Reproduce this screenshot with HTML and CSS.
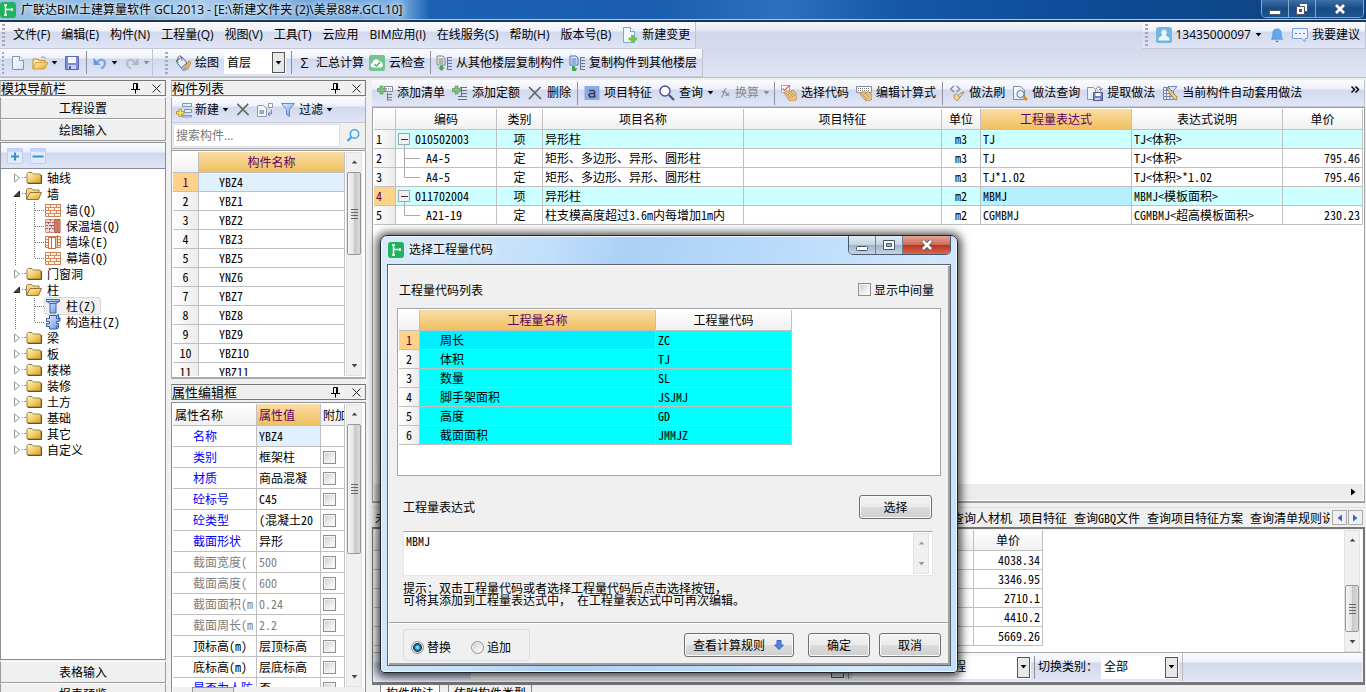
FILE: index.html
```html
<!DOCTYPE html>
<html lang="zh-CN">
<head>
<meta charset="utf-8">
<title>广联达BIM土建算量软件 GCL2013</title>
<link rel="stylesheet" href="styles.css">
</head>
<body>
<svg class="defs" aria-hidden="true">
  <defs>
    <linearGradient id="gold" x1="0" y1="0" x2="1" y2="1"><stop offset="0" stop-color="#fff3c0"/><stop offset=".5" stop-color="#f3cf6c"/><stop offset="1" stop-color="#d99a1e"/></linearGradient>
    <linearGradient id="blue" x1="0" y1="0" x2="1" y2="1"><stop offset="0" stop-color="#e4eeff"/><stop offset="1" stop-color="#6d95e0"/></linearGradient>
    <linearGradient id="paper" x1="0" y1="0" x2="1" y2="1"><stop offset="0" stop-color="#fff"/><stop offset="1" stop-color="#d6e0ee"/></linearGradient>
  </defs>
  <symbol id="logo" viewBox="0 0 16 16"><rect width="16" height="16" rx="3" fill="#1fb35c"/><path d="M4 3h3M5.500 3v10M4 13h3M6 7.500h7M12 6v3" stroke="#fff" stroke-width="1.500" fill="none"/></symbol>
  <symbol id="newdoc" viewBox="0 0 16 16"><path d="M2.500 1.500h7l4 4v9h-11z" fill="url(#paper)" stroke="#8494ad"/><path d="M9.500 1.500v4h4" fill="#fff" stroke="#8494ad"/></symbol>
  <symbol id="open" viewBox="0 0 16 16"><path d="M1 14V4h5l1 1.500h6V8" fill="#fbe7a8" stroke="#c08a26"/><path d="M1 14l3-6.500h12L12.500 14z" fill="url(#gold)" stroke="#d0a04a"/><path d="M9 3c2-2 4-1 5 1" fill="none" stroke="#6f8fb8"/></symbol>
  <symbol id="save" viewBox="0 0 16 16"><path d="M1.500 1.500h13v13h-13z" fill="#7f8edc" stroke="#5a68b8"/><path d="M4 2h8v6H4z" fill="#f4f7ff"/><path d="M4 10h8v4H4z" fill="#c9d2ee"/><path d="M5 11h2v3H5z" fill="#4a58a8"/></symbol>
  <symbol id="undo" viewBox="0 0 16 16"><path d="M5.500 7C8 3.500 13 4 13 8.500c0 2.500-2 4-4 5" fill="none" stroke="#7aa6e4" stroke-width="2.200"/><path d="M1.500 3v7h7z" fill="#6797dc"/></symbol>
  <symbol id="redo" viewBox="0 0 16 16"><path d="M10.500 7C8 3.500 3 4 3 8.500c0 2.500 2 4 4 5" fill="none" stroke="#b8bec9" stroke-width="2.200"/><path d="M14.500 3v7h-7z" fill="#adb4c2"/></symbol>
  <symbol id="caret" viewBox="0 0 8 5"><path d="M.500 0h7L4 4.500z" fill="currentColor"/></symbol>
  <symbol id="bucket" viewBox="0 0 16 16"><path d="M1 6l6-4 5 6-6 5z" fill="url(#paper)" stroke="#56657c"/><path d="M3 8C2 3 3 1 5 1s2 3 2 5" fill="none" stroke="#56657c"/><path d="M10 12l4-6 2 1-3 7-5 2z" fill="#eebc62" stroke="#ae7a22" stroke-width=".7"/><path d="M6 14l5-3 1 2-4 3z" fill="#7badea"/></symbol>
  <symbol id="cloud" viewBox="0 0 16 16"><rect width="16" height="16" rx="2" fill="#70c58d"/><path d="M4 12.500c-3 0-3-4-.5-4.500C4 4 9 3 10.500 6.500c4-.5 4.500 6 1 6z" fill="#fff"/><path d="M5.500 9l2 2L11 7" fill="none" stroke="#4cae70" stroke-width="1.300"/></symbol>
  <symbol id="copyfrom" viewBox="0 0 16 16"><path d="M1 1h6l2 2v7H1z" fill="#eee" stroke="#85888e"/><path d="M2.500 4h5M2.500 6h5M2.500 8h5" stroke="#777"/><path d="M11.500 2v13M11 2.500h5M11 5.500h5M11 8.500h5M11 11.500h5M11 14.500h5" stroke="#5379bf" fill="none"/><path d="M4 10.500h3v2h2L5.500 16 2 12.500h2z" fill="#45a456"/></symbol>
  <symbol id="copyto" viewBox="0 0 16 16"><path d="M1 1h6l2 2v7H1z" fill="#dce9ff" stroke="#4a73b5"/><path d="M2.500 4h5M2.500 6h5M2.500 8h5" stroke="#4a73b5"/><path d="M11.500 2v13M11 2.500h5M11 5.500h5M11 8.500h5M11 11.500h5M11 14.500h5" stroke="#727983" fill="none"/><path d="M3 11h3v2h2l-1 3H3z" fill="#45a456"/></symbol>
  <symbol id="docplus" viewBox="0 0 16 16"><path d="M1.500.5h7l4 4v11h-11z" fill="#f1f8ff" stroke="#72a7d5"/><path d="M8.500.5v4h4" fill="#fff" stroke="#72a7d5"/><path d="M9 8h3v2.500h3v3h-3V16H9v-2.500H6.500v-3H9z" fill="#74c33a"/></symbol>
  <symbol id="user" viewBox="0 0 16 16"><rect width="16" height="16" rx="2.500" fill="#73b7dd"/><path d="M8 2.500a3 3 0 0 1 1.500 5.500l4 3v2.500h-11V11l4-3A3 3 0 0 1 8 2.500z" fill="#e7f5fc"/></symbol>
  <symbol id="bell" viewBox="0 0 14 16"><path d="M7 1c4 0 4.500 3 4.500 6S12 10 13 12H1c1-2 1.500-2 1.500-5S3 1 7 1z" fill="#62a9f2" stroke="#4186cf" stroke-width=".7"/><path d="M5 13.500h4L7 15.500z" fill="#3c7dc4"/></symbol>
  <symbol id="chat" viewBox="0 0 16 16"><path d="M.5 1.500h15v10H13V15l-3-3.500H.500z" fill="#eaf2fd" stroke="#76a3e0"/><path d="M3 6.500h2M7 6.500h2M11 6.500h2" stroke="#4f7fc4"/></symbol>
  <symbol id="addlist" viewBox="0 0 16 16"><path d="M7.500 1.500h8v5h-8z" fill="#fff" stroke="#808894"/><path d="M9 3.500h6M9 5h6" stroke="#99a" stroke-dasharray="1 1"/><path d="M10.500 8v7M10 9.500h5M10 12.500h5M10 15h5" stroke="#777" fill="none"/><path d="M3 1h3v2.500h2.500v3H6V9H3V6.500H.5v-3H3z" fill="#81bf80" stroke="#4e8a50" stroke-width=".6"/></symbol>
  <symbol id="addquota" viewBox="0 0 16 16"><path d="M8 2.500h7M9 5.500h6M9 8.500h6M6 11.500h9M6 14.500h9M9.500 3v9" stroke="#6b6f78"/><path d="M3 1h3v2.500h2.500v3H6V9H3V6.500H.5v-3H3z" fill="#81bf80" stroke="#4e8a50" stroke-width=".6"/></symbol>
  <symbol id="del" viewBox="0 0 14 16"><path d="M1 2l12 12M12.500 2L1 14" stroke="#666" stroke-width="1.700" fill="none"/></symbol>
  <symbol id="feat" viewBox="0 0 16 16"><rect x=".5" y="1" width="15" height="14" fill="#8ca9e6"/><path d="M5 5.500h4.500l1 1V12M10 8.500H6l-1 1.300L6 12h3.500l1-1 1 1" stroke="#343e5a" stroke-width="1.700" fill="none"/></symbol>
  <symbol id="glass" viewBox="0 0 16 16"><circle cx="6" cy="6" r="5" fill="#fff" stroke="#4d4d9a" stroke-width="1.400"/><path d="M10 10l5 5" stroke="#4d4d9a" stroke-width="2.200"/></symbol>
  <symbol id="fx" viewBox="0 0 14 16"><path d="M2 14c3 0 3-12 7-12M3 6.500h5M7.500 8c3-1 2 4 5 4M12.500 8l-5 4" fill="none" stroke="#8b8e98" stroke-width="1.500"/></symbol>
  <symbol id="hand1" viewBox="0 0 16 16"><path d="M.5.5h8v7h-8z" fill="#fff" stroke="#a4a4b0"/><path d="M1.500 3.500l2 2L9 0" stroke="#d66" stroke-width="1.400" fill="none"/><path d="M3 8l3-2.500 3 1 3-1.500 4 5v4l-3 2H9z" fill="#e8c383" stroke="#a88447" stroke-width=".8"/><path d="M5 8l5 5M7 7l5 5M10 7l4 4" stroke="#a88447" stroke-width=".7"/></symbol>
  <symbol id="hand2" viewBox="0 0 16 16"><path d="M.5 1.500h15v6H.500z" fill="#fff" stroke="#888b96"/><path d="M2 3.500h12M2 5.500h12" stroke="#777" stroke-dasharray="1 1"/><path d="M4 9l3-2.500 3 1 2-1 4 3.500v4l-3 2h-3z" fill="#e8c383" stroke="#a88447" stroke-width=".8"/><path d="M6 9l5 5M9 8l4 4" stroke="#a88447" stroke-width=".7"/></symbol>
  <symbol id="brush" viewBox="0 0 16 16"><path d="M5 1L1.500 4 5 7M7.500 1l3.500 3-3.500 3" stroke="#7c87a2" stroke-width="1.200" fill="none"/><path d="M15 7l-3 1-3 3 1 2 3-3z" fill="#eee0a0" stroke="#817a64" stroke-width=".8"/><path d="M5 10l3-1 3 4-3 3-3-3z" fill="#f2d58d" stroke="#a98b4e" stroke-width=".8"/></symbol>
  <symbol id="docglass" viewBox="0 0 16 16"><path d="M1.500 1.500h7l4 3.500v9.500h-11z" fill="url(#paper)" stroke="#7f8b9f"/><circle cx="8.500" cy="9" r="3.600" fill="#e4f1ff" stroke="#6f7680"/><path d="M11.500 11.500l3.500 3.500" stroke="#d68b2a" stroke-width="2.500"/></symbol>
  <symbol id="docsave" viewBox="0 0 16 16"><path d="M.5 2.500h6l2 2v10h-8z" fill="url(#paper)" stroke="#8994a8"/><path d="M6.500 7.500h9v8h-9z" fill="#7884b8" stroke="#4f5a8d"/><path d="M8.500 8h5v3h-5z" fill="#fff"/><path d="M8 13h5v2H8z" fill="#c9d2ee"/><path d="M9 4c2-4 5-2 5 1m-2-1l2 1.500L15.500 3" stroke="#777" fill="none"/></symbol>
  <symbol id="gridpen" viewBox="0 0 16 16"><path d="M1.500 2.500h10v12h-10zM1.500 5.500h10M1.500 8.500h10M1.500 11.500h10M4.500 2.500v12M8 2.500v12" fill="#eef3ff" stroke="#7085b6"/><path d="M6 1.500h9L11 6" fill="#dbe6fa" stroke="#7085b6"/><path d="M5 4l2-1 8 9-.5 3-3-1z" fill="#eac986" stroke="#846435" stroke-width=".7"/></symbol>
  <symbol id="newitem" viewBox="0 0 16 16"><path d="M6.500 1.500h9v3h-9zM8.500 7.500h7v3h-7zM6.500 13.500h9v1.500h-9z" fill="#e5eefa" stroke="#7f94b5"/><path d="M3 7h2.500v2.500H8V12H5.500v2.500H3V12H.500V9.500H3z" fill="#ffe54b" stroke="#a99020" stroke-width=".8"/></symbol>
  <symbol id="copydoc" viewBox="0 0 16 16"><path d="M.5 3.500h6l3 3v8h-9z" fill="#f2f5fb" stroke="#919ba9"/><path d="M2.500 8h4.500v4H2.500z" fill="#9aa7bb"/><path d="M11.500 1.500h4v4h-4z" fill="#fff" stroke="#919ba9"/><path d="M14.500 8v4H11m2-2l-2 2 2 2" stroke="#5983d5" fill="none"/></symbol>
  <symbol id="funnel" viewBox="0 0 16 16"><path d="M1.500 1.500h13l-5 6v7l-3-2v-5z" fill="url(#blue)" stroke="#608cd6"/></symbol>
  <symbol id="search" viewBox="0 0 14 14"><circle cx="8.500" cy="5.500" r="4.200" fill="#eaf7ff" stroke="#4ba3e1" stroke-width="1.600"/><path d="M5.500 8.500L1.500 12.500" stroke="#4ba3e1" stroke-width="2.400"/></symbol>
  <symbol id="expand" viewBox="0 0 16 16"><path d="M.500.500h15v15H.500z" fill="#e1ebff" stroke="#bdcff5"/><path d="M1 1h14v3H1z" fill="#c6d7ff"/><path d="M8 4.500v8M4 8.500h8" stroke="#3b90c8" stroke-width="2"/></symbol>
  <symbol id="collapse" viewBox="0 0 16 16"><path d="M.500.500h15v15H.500z" fill="#e1ebff" stroke="#bdcff5"/><path d="M1 1h14v3H1z" fill="#c6d7ff"/><path d="M2.500 8.500h11" stroke="#3b90c8" stroke-width="2"/></symbol>
  <symbol id="folder" viewBox="0 0 16 16"><path d="M1 13V3.500L2 2.500h4l1.500 1.500H14l1 1v8z" fill="url(#gold)" stroke="#9a8050"/><path d="M2 13.500h13.500V5" stroke="#6b4d1c" fill="none"/></symbol>
  <symbol id="folderopen" viewBox="0 0 16 16"><path d="M.5 13V3.500l1-1h4L7 4h6v2.500" fill="#f5d989" stroke="#9a8050"/><path d="M.500 13.500L4 6.500h11.500l-3 7z" fill="url(#gold)" stroke="#987338"/></symbol>
  <symbol id="wall" viewBox="0 0 16 16"><path d="M.5 2.500h15v12H.500z" fill="#fff5e8" stroke="#d27e52"/><path d="M1 5.500h14M1 8.500h14M1 11.500h14M5.500 3v3M11.500 3v3M3.500 6v3M9.500 6v3M5.500 9v3M11.500 9v3M3.500 12v3M9.500 12v3" stroke="#dc8758"/></symbol>
  <symbol id="wall2" viewBox="0 0 16 16"><path d="M.5 1.500h9v13h-9z" fill="#f1d7d3" stroke="#c5928c"/><path d="M1 4.500h8M1 7.500h8M1 10.500h8M5.500 1v3M3.500 4v3M6.500 7v3M4.500 10v4" stroke="#9a6260" stroke-dasharray="2 1"/><path d="M10 1.500h2v13h-2zM13 1.500h2v13h-2z" fill="#f0bd99" stroke="#a8432c"/></symbol>
  <symbol id="wall3" viewBox="0 0 16 16"><path d="M.5 2.500h15v11H.500z" fill="#fff5e8" stroke="#d27e52"/><path d="M1 5.500h3M1 8.500h3M1 11.500h3M11 5.500h4M11 8.500h4M11 11.500h4" stroke="#dc8758"/><path d="M3.500 3.500h3v11h-3zM6.500 3.500h4v11h-4z" fill="#fff" stroke="#c86c42"/><path d="M10.500 3.500l2-2v11l-2 2z" fill="#f4c9a8" stroke="#c86c42"/></symbol>
  <symbol id="pillar" viewBox="0 0 16 16"><path d="M1.500 1.500h13v2l-3.500 2v9.500H5V5.500l-3.500-2z" fill="url(#blue)" stroke="#3f66be"/><path d="M2 3.500h12M5 5.500h6" stroke="#3f66be"/></symbol>
  <symbol id="pillar2" viewBox="0 0 16 16"><path d="M4.500 1.500h7v3h2v3h-2v2h2v3h-2v2.500h-7v-2.500h-3v-3h3v-2h-3v-3h3z" fill="url(#blue)" stroke="#315cae"/><path d="M11.500 1.500l2-1v4M13.500 4.500L15 3.500v3L13.500 8M11.500 15l2-1v-2" stroke="#315cae" fill="#8da9d8"/></symbol>
  <symbol id="shut" viewBox="0 0 13 16"><path d="M1.500 4l5 4-5 4z" fill="#fff" stroke="#999"/><path d="M11.500 7.500h1.500M9 7.500h1" stroke="#777"/></symbol>
  <symbol id="opened" viewBox="0 0 13 16"><path d="M6.500 5v5.500H1z" fill="#444" stroke="#222"/><path d="M11.500 7.500h1.500M9 7.500h1" stroke="#777"/></symbol>
  <symbol id="guide" viewBox="0 0 42 16"><path d="M12.500 0v16M31.500 0v16M32 8.500h10" stroke="#777" stroke-dasharray="1 1" fill="none"/></symbol>
  <symbol id="guidelast" viewBox="0 0 42 16"><path d="M12.500 0v16M31.500 0v8M32 8.500h10" stroke="#777" stroke-dasharray="1 1" fill="none"/></symbol>
  <symbol id="pin" viewBox="0 0 9 11"><path d="M2.500 6V.5h4V6M5.500 0v6M0 6.500h9M4.500 6v4.500" stroke="#000" fill="none"/></symbol>
  <symbol id="close" viewBox="0 0 9 9"><path d="M.5.5l8 8M8.500.5l-8 8" stroke="#222" fill="none"/></symbol>
  <symbol id="wmin" viewBox="0 0 14 14"><rect x="1.500" y="8.500" width="11" height="4" rx="1" fill="#fff" stroke="#4c5566"/></symbol>
  <symbol id="wmax" viewBox="0 0 14 14"><path d="M1.500 2.500h11v9h-11z" fill="#fff" stroke="#4c5566"/><path d="M4.500 5.500h5v3h-5z" fill="#9fb4cc" stroke="#4c5566"/></symbol>
  <symbol id="wrest" viewBox="0 0 14 14"><path d="M4.500 1.500h8v8h-8z" fill="#fff" stroke="#4c5566"/><path d="M1.500 4.500h8v8h-8z" fill="#fff" stroke="#4c5566"/><path d="M4 7h3v3H4z" fill="#4c5566"/></symbol>
  <symbol id="wx" viewBox="0 0 14 14"><path d="M3 3l8 8M11 3l-8 8" stroke="#4c5566" stroke-width="4.500"/><path d="M3 3l8 8M11 3l-8 8" stroke="#fff" stroke-width="2.600"/></symbol>
  <symbol id="down" viewBox="0 0 12 12"><path d="M4 1.500h4v4.500h2.500L6 10.500 1.500 6H4z" fill="#4f86e8" stroke="#3a63bd"/></symbol>
  <symbol id="up3" viewBox="0 0 8 5"><path d="M.500 4.500h7L4 .5z" fill="currentColor"/></symbol>
  <symbol id="right3" viewBox="0 0 5 8"><path d="M0 .5v7L4.500 4z" fill="currentColor"/></symbol>
  <symbol id="left3" viewBox="0 0 5 8"><path d="M5 .5v7L.500 4z" fill="currentColor"/></symbol>
  <symbol id="chev" viewBox="0 0 9 7"><path d="M.5.5l3 3-3 3M4.500.5l3 3-3 3" stroke="#000" stroke-width="1.500" fill="none"/></symbol>
  <symbol id="node" viewBox="0 0 19 18"><rect x="2.500" y="3.500" width="11" height="11" fill="#f2f2f2" stroke="#a5a5a5"/><path d="M5 9.500h7" stroke="#333"/><path d="M8.500 15v3" stroke="#aaa"/></symbol>
  <symbol id="tee" viewBox="0 0 30 18"><path d="M8.500 0v18M9 9.500h15" stroke="#aaa"/></symbol>
  <symbol id="ell" viewBox="0 0 30 18"><path d="M8.500 0v9.500H24" stroke="#aaa" fill="none"/></symbol>
</svg>

<div class="app">
  <header class="titlebar">
    <svg class="i16"><use href="#logo"/></svg>
    <h1>广联达BIM土建算量软件 GCL2013 - [E:\新建文件夹 (2)\美景88#.GCL10]</h1>
    <div class="winbtns">
      <button aria-label="最小化"><svg><use href="#wmin"/></svg></button>
      <button aria-label="还原"><svg><use href="#wrest"/></svg></button>
      <button class="wide" aria-label="关闭"><svg><use href="#wx"/></svg></button>
    </div>
  </header>

  <div class="barrow">
    <nav class="strip menu">
      <span class="grip"></span>
      <button>文件(F)</button><button>编辑(E)</button><button>构件(N)</button><button>工程量(Q)</button><button>视图(V)</button><button>工具(T)</button><button>云应用</button><button>BIM应用(I)</button><button>在线服务(S)</button><button>帮助(H)</button><button>版本号(B)</button><button><svg class="i16"><use href="#docplus"/></svg>新建变更</button>
    </nav>
    <div class="strip account">
      <span class="grip"></span>
      <button><svg class="i16"><use href="#user"/></svg>13435000097<svg class="caret"><use href="#caret"/></svg></button>
      <button aria-label="消息"><svg class="i14"><use href="#bell"/></svg></button>
      <button><svg class="i16"><use href="#chat"/></svg>我要建议</button>
    </div>
  </div>

  <div class="barrow">
    <div class="strip tools files">
      <span class="grip"></span>
      <button aria-label="新建"><svg class="i16"><use href="#newdoc"/></svg></button>
      <button aria-label="打开"><svg class="i16"><use href="#open"/></svg><svg class="caret"><use href="#caret"/></svg></button>
      <button aria-label="保存"><svg class="i16"><use href="#save"/></svg></button>
      <span class="sep"></span>
      <button aria-label="撤销"><svg class="i16"><use href="#undo"/></svg><svg class="caret"><use href="#caret"/></svg></button>
      <button class="off" aria-label="恢复"><svg class="i16"><use href="#redo"/></svg><svg class="caret"><use href="#caret"/></svg></button>
    </div>
    <div class="strip tools draw">
      <span class="grip"></span>
      <button><svg class="i16"><use href="#bucket"/></svg>绘图</button>
      <span class="combo floor"><select aria-label="楼层"><option>首层</option></select><span class="drop"><svg class="caret"><use href="#caret"/></svg></span></span>
      <span class="sep"></span>
      <button><span class="sigma">Σ</span>汇总计算</button>
      <button><svg class="i16"><use href="#cloud"/></svg>云检查</button>
      <span class="sep"></span>
      <button><svg class="i16"><use href="#copyfrom"/></svg>从其他楼层复制构件</button>
      <button><svg class="i16"><use href="#copyto"/></svg>复制构件到其他楼层</button>
    </div>
  </div>

  <main class="work">
    <aside class="col nav">
      <h2 class="cap">模块导航栏<svg class="pin"><use href="#pin"/></svg><svg class="x"><use href="#close"/></svg></h2>
      <button class="slab">工程设置</button>
      <button class="slab">绘图输入</button>
      <div class="treebox">
        <div class="strip treebar"><button aria-label="展开"><svg class="i16"><use href="#expand"/></svg></button><button aria-label="折叠"><svg class="i16"><use href="#collapse"/></svg></button></div>
        <ul class="tree">
          <li><svg class="tw"><use href="#shut"/></svg><svg class="i16"><use href="#folder"/></svg><span>轴线</span></li>
          <li><svg class="tw"><use href="#opened"/></svg><svg class="i16"><use href="#folderopen"/></svg><span>墙</span></li>
          <li><svg class="gd"><use href="#guide"/></svg><svg class="i16"><use href="#wall"/></svg><span>墙(Q)</span></li>
          <li><svg class="gd"><use href="#guide"/></svg><svg class="i16"><use href="#wall2"/></svg><span>保温墙(Q)</span></li>
          <li><svg class="gd"><use href="#guide"/></svg><svg class="i16"><use href="#wall3"/></svg><span>墙垛(E)</span></li>
          <li><svg class="gd"><use href="#guidelast"/></svg><svg class="i16"><use href="#wall"/></svg><span>幕墙(Q)</span></li>
          <li><svg class="tw"><use href="#shut"/></svg><svg class="i16"><use href="#folder"/></svg><span>门窗洞</span></li>
          <li><svg class="tw"><use href="#opened"/></svg><svg class="i16"><use href="#folderopen"/></svg><span>柱</span></li>
          <li><svg class="gd"><use href="#guide"/></svg><span class="sel"><svg class="i16"><use href="#pillar"/></svg><span>柱(Z)</span></span></li>
          <li><svg class="gd"><use href="#guidelast"/></svg><svg class="i16"><use href="#pillar2"/></svg><span>构造柱(Z)</span></li>
          <li><svg class="tw"><use href="#shut"/></svg><svg class="i16"><use href="#folder"/></svg><span>梁</span></li>
          <li><svg class="tw"><use href="#shut"/></svg><svg class="i16"><use href="#folder"/></svg><span>板</span></li>
          <li><svg class="tw"><use href="#shut"/></svg><svg class="i16"><use href="#folder"/></svg><span>楼梯</span></li>
          <li><svg class="tw"><use href="#shut"/></svg><svg class="i16"><use href="#folder"/></svg><span>装修</span></li>
          <li><svg class="tw"><use href="#shut"/></svg><svg class="i16"><use href="#folder"/></svg><span>土方</span></li>
          <li><svg class="tw"><use href="#shut"/></svg><svg class="i16"><use href="#folder"/></svg><span>基础</span></li>
          <li><svg class="tw"><use href="#shut"/></svg><svg class="i16"><use href="#folder"/></svg><span>其它</span></li>
          <li><svg class="tw"><use href="#shut"/></svg><svg class="i16"><use href="#folder"/></svg><span>自定义</span></li>
        </ul>
      </div>
      <button class="slab">表格输入</button>
      <button class="slab">报表预览</button>
    </aside>

    <section class="col parts">
      <h2 class="cap">构件列表<svg class="pin"><use href="#pin"/></svg><svg class="x"><use href="#close"/></svg></h2>
      <div class="partbox">
        <div class="strip partbar">
          <button><svg class="i16"><use href="#newitem"/></svg>新建<svg class="caret"><use href="#caret"/></svg></button>
          <button aria-label="删除"><svg class="i14"><use href="#del"/></svg></button>
          <button aria-label="复制"><svg class="i16"><use href="#copydoc"/></svg></button>
          <button><svg class="i16"><use href="#funnel"/></svg>过滤<svg class="caret"><use href="#caret"/></svg></button>
        </div>
        <div class="find"><input type="text" aria-label="搜索构件" placeholder="搜索构件..."><button aria-label="搜索"><svg class="i14"><use href="#search"/></svg></button></div>
        <div class="scroller list">
          <div class="view">
            <table class="grid">
              <colgroup><col class="w26"><col></colgroup>
              <thead><tr><th></th><th class="hot">构件名称</th></tr></thead>
              <tbody>
                <tr class="cur"><th>1</th><td class="pick">YBZ4</td></tr>
                <tr><th>2</th><td>YBZ1</td></tr>
                <tr><th>3</th><td>YBZ2</td></tr>
                <tr><th>4</th><td>YBZ3</td></tr>
                <tr><th>5</th><td>YBZ5</td></tr>
                <tr><th>6</th><td>YNZ6</td></tr>
                <tr><th>7</th><td>YBZ7</td></tr>
                <tr><th>8</th><td>YBZ8</td></tr>
                <tr><th>9</th><td>YBZ9</td></tr>
                <tr><th>10</th><td>YBZ10</td></tr>
                <tr><th>11</th><td>YBZ11</td></tr>
              </tbody>
            </table>
          </div>
          <div class="vsb"><svg class="caret"><use href="#up3"/></svg><span class="thumb t1"></span><svg class="caret"><use href="#caret"/></svg></div>
        </div>
      </div>
      <h2 class="cap second">属性编辑框<svg class="pin"><use href="#pin"/></svg><svg class="x"><use href="#close"/></svg></h2>
      <div class="propbox">
        <div class="scroller">
          <div class="view">
            <table class="grid props">
              <colgroup><col class="w84"><col class="w64"><col></colgroup>
              <thead><tr><th>属性名称</th><th class="hot">属性值</th><th>附加</th></tr></thead>
              <tbody>
                <tr class="b"><th>名称</th><td class="pick">YBZ4</td><td></td></tr>
                <tr class="b"><th>类别</th><td>框架柱</td><td><input type="checkbox" aria-label="类别附加"></td></tr>
                <tr class="b"><th>材质</th><td>商品混凝</td><td><input type="checkbox" aria-label="材质附加"></td></tr>
                <tr class="b"><th>砼标号</th><td>C45</td><td><input type="checkbox" aria-label="砼标号附加"></td></tr>
                <tr class="b"><th>砼类型</th><td>(混凝土20</td><td><input type="checkbox" aria-label="砼类型附加"></td></tr>
                <tr class="b"><th>截面形状</th><td>异形</td><td><input type="checkbox" aria-label="截面形状附加"></td></tr>
                <tr class="g"><th>截面宽度(</th><td>500</td><td><input type="checkbox" aria-label="截面宽度附加"></td></tr>
                <tr class="g"><th>截面高度(</th><td>600</td><td><input type="checkbox" aria-label="截面高度附加"></td></tr>
                <tr class="g"><th>截面面积(m</th><td>0.24</td><td><input type="checkbox" aria-label="截面面积附加"></td></tr>
                <tr class="g"><th>截面周长(m</th><td>2.2</td><td><input type="checkbox" aria-label="截面周长附加"></td></tr>
                <tr><th>顶标高(m)</th><td>层顶标高</td><td><input type="checkbox" aria-label="顶标高附加"></td></tr>
                <tr><th>底标高(m)</th><td>层底标高</td><td><input type="checkbox" aria-label="底标高附加"></td></tr>
                <tr class="b"><th>是否为人防</th><td>否</td><td><input type="checkbox" aria-label="人防附加"></td></tr>
              </tbody>
            </table>
          </div>
          <div class="vsb"><svg class="caret"><use href="#up3"/></svg><span class="thumb t2"></span><svg class="caret"><use href="#caret"/></svg></div>
        </div>
        <div class="hsb"><span class="hthumb"></span></div>
      </div>
    </section>

    <section class="right">
      <div class="strip tools acts">
        <button><svg class="i16"><use href="#addlist"/></svg>添加清单</button>
        <button><svg class="i16"><use href="#addquota"/></svg>添加定额</button>
        <button><svg class="i16"><use href="#del"/></svg>删除</button>
        <span class="sep"></span>
        <button><svg class="i16"><use href="#feat"/></svg>项目特征</button>
        <button class="drops"><svg class="i16"><use href="#glass"/></svg>查询<svg class="caret"><use href="#caret"/></svg></button>
        <button class="drops off"><svg class="i12"><use href="#fx"/></svg>换算<svg class="caret"><use href="#caret"/></svg></button>
        <span class="sep"></span>
        <button><svg class="i16"><use href="#hand1"/></svg>选择代码</button>
        <button><svg class="i16"><use href="#hand2"/></svg>编辑计算式</button>
        <span class="sep"></span>
        <button><svg class="i16"><use href="#brush"/></svg>做法刷</button>
        <button><svg class="i16"><use href="#docglass"/></svg>做法查询</button>
        <button><svg class="i16"><use href="#docsave"/></svg>提取做法</button>
        <button><svg class="i16"><use href="#gridpen"/></svg>当前构件自动套用做法</button>
        <button class="more" aria-label="更多"><svg class="chev"><use href="#chev"/></svg></button>
      </div>
      <div class="sheet">
        <table class="grid bill">
          <colgroup><col class="w22"><col class="w101"><col class="w46"><col class="w201"><col><col class="w39"><col class="w151"><col class="w151"><col class="w80"></colgroup>
          <thead><tr><th></th><th>编码</th><th>类别</th><th>项目名称</th><th>项目特征</th><th>单位</th><th class="hot">工程量表达式</th><th>表达式说明</th><th>单价</th></tr></thead>
          <tbody>
            <tr class="item"><th>1</th><td class="code"><span><svg class="nd"><use href="#node"/></svg>010502003</span></td><td>项</td><td>异形柱</td><td></td><td>m3</td><td>TJ</td><td>TJ&lt;体积&gt;</td><td></td></tr>
            <tr><th>2</th><td class="code"><span><svg class="br"><use href="#tee"/></svg>A4-5</span></td><td>定</td><td>矩形、多边形、异形、圆形柱</td><td></td><td>m3</td><td>TJ</td><td>TJ&lt;体积&gt;</td><td>795.46</td></tr>
            <tr><th>3</th><td class="code"><span><svg class="br"><use href="#ell"/></svg>A4-5</span></td><td>定</td><td>矩形、多边形、异形、圆形柱</td><td></td><td>m3</td><td>TJ*1.02</td><td>TJ&lt;体积&gt;*1.02</td><td>795.46</td></tr>
            <tr class="item cur"><th>4</th><td class="code"><span><svg class="nd"><use href="#node"/></svg>011702004</span></td><td>项</td><td>异形柱</td><td></td><td>m2</td><td class="focus">MBMJ</td><td>MBMJ&lt;模板面积&gt;</td><td></td></tr>
            <tr><th>5</th><td class="code"><span><svg class="br"><use href="#ell"/></svg>A21-19</span></td><td>定</td><td>柱支模高度超过3.6m内每增加1m内</td><td></td><td>m2</td><td>CGMBMJ</td><td>CGMBMJ&lt;超高模板面积&gt;</td><td>230.23</td></tr>
          </tbody>
        </table>
        <div class="hscroll"><svg class="tri"><use href="#right3"/></svg></div>
      </div>
      <div class="tabs">
        <button>未</button>
        <div class="tabset"><button>查询人材机</button><button>项目特征</button><button>查询GBQ文件</button><button>查询项目特征方案</button><button>查询清单规则说</button></div>
        <div class="spin"><button aria-label="左"><svg class="tri"><use href="#left3"/></svg></button><button aria-label="右"><svg class="tri"><use href="#right3"/></svg></button></div>
      </div>
      <div class="lower">
        <div class="scroller">
          <div class="view">
            <table class="grid price">
              <colgroup><col class="w600"><col class="w69"></colgroup>
              <thead><tr><th></th><th>单价</th></tr></thead>
              <tbody>
                <tr><td></td><td>4038.34</td></tr><tr><td></td><td>3346.95</td></tr><tr><td></td><td>2710.1</td></tr><tr><td></td><td>4410.2</td></tr><tr><td></td><td>5669.26</td></tr>
              </tbody>
            </table>
          </div>
          <div class="vsb"><svg class="caret"><use href="#up3"/></svg><span class="thumb t3"></span><svg class="caret"><use href="#caret"/></svg></div>
        </div>
        <div class="strip filter">
          <span class="combo quota"><select aria-label="定额"></select><span class="drop"><svg class="caret"><use href="#caret"/></svg></span></span>
          <span class="sep"></span>
          <span class="combo chapter"><select aria-label="专业"><option>程</option></select><span class="drop"><svg class="caret"><use href="#caret"/></svg></span></span>
          <span class="sep"></span>
          <label for="kind">切换类别：</label>
          <span class="combo kind"><select id="kind"><option>全部</option></select><span class="drop"><svg class="caret"><use href="#caret"/></svg></span></span>
          <span class="end"></span>
        </div>
      </div>
      <div class="foot"><button class="on">构件做法</button><button>依附构件类型</button></div>
    </section>
  </main>
</div>

<div class="dialog" role="dialog" aria-labelledby="dlg">
  <div class="dtitle">
    <svg class="i16"><use href="#logo"/></svg><h2 id="dlg">选择工程量代码</h2>
    <div class="winbtns light">
      <button aria-label="最小化"><svg><use href="#wmin"/></svg></button>
      <button aria-label="最大化"><svg><use href="#wmax"/></svg></button>
      <button class="wide red" aria-label="关闭"><svg><use href="#wx"/></svg></button>
    </div>
  </div>
  <div class="dbody">
    <div class="line first"><span>工程量代码列表</span><label><input type="checkbox">显示中间量</label></div>
    <div class="codes">
      <table class="grid cyan">
        <colgroup><col class="w21"><col class="w236"><col class="w136"></colgroup>
        <thead><tr><th></th><th class="hot">工程量名称</th><th>工程量代码</th></tr></thead>
        <tbody>
          <tr class="cur"><th>1</th><td class="lit">周长</td><td>ZC</td></tr>
          <tr><th>2</th><td>体积</td><td>TJ</td></tr>
          <tr><th>3</th><td>数量</td><td>SL</td></tr>
          <tr><th>4</th><td>脚手架面积</td><td>JSJMJ</td></tr>
          <tr><th>5</th><td>高度</td><td>GD</td></tr>
          <tr><th>6</th><td>截面面积</td><td>JMMJZ</td></tr>
        </tbody>
      </table>
    </div>
    <div class="line expr"><label for="expr">工程量表达式</label><button class="btn pickbtn">选择</button></div>
    <div class="exprbox"><textarea id="expr">MBMJ</textarea><div class="vsb faint"><svg class="caret"><use href="#up3"/></svg><svg class="caret"><use href="#caret"/></svg></div></div>
    <p class="hint">提示：双击工程量代码或者选择工程量代码后点击选择按钮，<br>可将其添加到工程量表达式中， 在工程量表达式中可再次编辑。</p>
    <div class="dfoot">
      <div class="modes"><label><input type="radio" name="mode" checked>替换</label><label><input type="radio" name="mode">追加</label></div>
      <button class="btn rules">查看计算规则<svg class="i12"><use href="#down"/></svg></button>
      <button class="btn">确定</button>
      <button class="btn">取消</button>
    </div>
  </div>
</div>
</body>
</html>
```

FILE: styles.css
```css
* { box-sizing: border-box; }
html, body { height: 100%; }
body {
  margin: 0;
  overflow: hidden;
  background: #f0f0f0;
  color: #000;
  font: 12px/16px "Noto Sans Mono CJK SC", "Noto Sans CJK SC", sans-serif;
}
button, input, select, textarea { font: inherit; color: inherit; margin: 0; border-radius: 0; }
button { padding: 0; border: 0; background: none; white-space: nowrap; }
h1, h2, ul, p { margin: 0; padding: 0; font-weight: normal; list-style: none; }
svg { display: block; flex: none; }
.defs { position: absolute; width: 0; height: 0; }
.i16 { width: 16px; height: 16px; }
.i14 { width: 14px; height: 15px; }
.i12 { width: 12px; height: 12px; }
.caret { width: 7px; height: 4px; }
.tri { width: 5px; height: 8px; }

.app { display: flex; flex-direction: column; height: 100vh; }

/* window title */
.titlebar {
  display: flex;
  flex: none;
  align-items: center;
  gap: 5px;
  height: 22px;
  border-bottom: 2px solid #1c3555;
  box-shadow: inset 0 -1px #a8c8ea;
  background: linear-gradient(90deg, #9cc0e2 0, #84b6e4 110px, #a8cbea 200px, #6ea6dc 310px, #7aafe0 400px, #1b62b4 430px, #1a5dae 650px, #2a72bd 780px, #1458a6 900px, #0d4b95 1100px, #0f427f 100%);
}
.titlebar h1, .dtitle h2 {
  font: 12px/20px "Open Sans", "Noto Sans CJK SC", sans-serif;
  text-shadow: 0 0 5px #fff, 0 0 8px #fff;
  white-space: nowrap;
}
.winbtns { display: flex; align-self: flex-start; margin: 0 2px 0 auto; border: 1px solid #87a8cb; border-top: 0; border-radius: 0 0 5px 5px; overflow: hidden; }
.winbtns button { display: flex; align-items: center; justify-content: center; width: 27px; height: 17px; border-right: 1px solid #87a8cb; background: linear-gradient(#3d70a8, #184c86 50%, #1c568f); }
.winbtns .wide { width: 47px; border-right: 0; }
.winbtns svg { width: 14px; height: 14px; }
.light { border-color: #4b5a6e; }
.light button { height: 18px; border-color: #6f8196; background: linear-gradient(#e2ecf7, #c5d4e4 48%, #9fb3c8 50%, #c2d5e8); }
.light .red { background: linear-gradient(#e6a598, #d06a58 48%, #b8311c 50%, #d9694f); }

/* toolbars */
.barrow { display: flex; flex: none; justify-content: space-between; background: linear-gradient(#f4f6fb, #e2e7f3 9px, #d2d7ec 10px, #d5daee); }
.barrow + .barrow { justify-content: flex-start; border-bottom: 1px solid #b9bccb; background: linear-gradient(#d4d9ed, #e0e5f4); }
.strip {
  display: flex;
  align-items: center;
  border-right: 1px solid #c0c4d2;
  border-bottom: 1px solid #c4c8d6;
  background: linear-gradient(#fafbfe, #eef1f9 9px, #d2d9ed 10px, #e0e6f6);
  font-family: "Open Sans", "Noto Sans CJK SC", sans-serif;
}
.strip button { display: flex; align-items: center; gap: 4px; }
.grip { width: 3px; height: 22px; background: repeating-linear-gradient(#a4a9b8 0 2px, transparent 2px 4px); }
.sep { width: 1px; height: 23px; background: #8c909c; }
.off { color: #888b93; }
.menu { gap: 11px; height: 27px; padding: 0 5px 0 2px; }
.menu .grip { margin-right: -3px; }
.account { gap: 8px; height: 27px; padding: 0 5px 0 3px; }
.tools { gap: 7px; height: 28px; }
.files { gap: 6px; padding: 0 2px; width: 153px; }
.files button { gap: 3px; }
.draw { gap: 5px; padding: 0 5px 0 12px; }
.draw .grip { margin-right: 2px; }
.combo { display: flex; border: 1px solid #fff; background: #fff; }
.combo select { flex: 1; min-width: 0; padding: 0 0 0 2px; border: 0; background: #fff; appearance: none; }
.drop { display: flex; align-items: center; justify-content: center; flex: none; width: 13px; height: 21px; border: 1px solid #555; background: #e8e8e8; }
.floor { width: 62px; }
.sigma { width: 15px; font-size: 14px; text-align: center; }

/* work area columns */
.work { display: flex; flex: 1; min-height: 0; padding-top: 2px; }
.col { display: flex; flex-direction: column; flex: none; min-height: 0; }
.nav { width: 166px; margin-bottom: -13px; }
.parts { width: 195px; margin: 0 6px 0 5px; }
.cap { display: flex; flex: none; align-items: center; gap: 12px; height: 16px; padding-right: 4px; border: 1px solid #777; border-left-color: #bbb; font-size: 13px; line-height: 14px; }
.cap .pin { width: 9px; height: 11px; margin-left: auto; }
.cap .x { width: 9px; height: 9px; }
.slab { flex: none; height: 22px; border: 1px solid #9b9b9b; border-top-color: #fff; background: #f0f0f0; line-height: 20px; }
.cap + .slab { margin-top: 1px; }
.treebox { display: flex; flex-direction: column; flex: 1; min-height: 0; margin: 1px 0; border: 1px solid #8b8f98; background: #fff; }
.treebar { flex: none; gap: 7px; height: 26px; padding-left: 6px; border-right: 0; border-bottom: 1px solid #878b98; }
.tree { padding: 1px 0 0 2px; }
.tree li, .sel { display: flex; align-items: center; height: 16px; white-space: nowrap; }
.tree .tw { width: 13px; height: 16px; margin-left: 10px; }
.tree .gd { width: 42px; height: 16px; }
.tree li span span, .tree li > span:not(.sel) { margin-left: 5px; }
.sel { padding-right: 4px; border-radius: 3px; background: #f0f0f0; box-shadow: 0 0 0 1px #d8d8d8; }

/* component list */
.partbox { display: flex; flex-direction: column; flex: none; height: 282px; margin-top: 1px; border: 1px solid #a9abb2; border-width: 0 1px 2px; }
.partbar { flex: none; gap: 7px; height: 26px; padding-left: 4px; border-right: 0; }
.partbar button { gap: 3px; }
.find { display: flex; align-items: center; flex: none; gap: 6px; height: 26px; padding-left: 1px; border-bottom: 1px solid #aaa; }
.find input { flex: 1; min-width: 0; height: 23px; padding: 0 2px; border: 1px solid #dcdfe6; background: #fff; font-family: "Open Sans", "Noto Sans CJK SC", sans-serif; }
.find input::placeholder { color: #777; opacity: 1; }
.find button { margin-right: 5px; }
.scroller { display: flex; flex: 1; min-height: 0; background: #fff; }
.list { margin-top: 1px; padding: 1px; border-top: 1px solid #999; }
.view { flex: 1; min-width: 0; overflow: hidden; }
.vsb { display: flex; flex-direction: column; align-items: center; justify-content: space-between; flex: none; width: 16px; margin: 0 2px 0 1px; padding: 7px 0; border: 1px solid #e3e3e3; background: #f0f0f0; color: #444; }
.thumb { width: 14px; margin: 8px 0 auto; border: 1px solid #979797; border-radius: 2px; background: repeating-linear-gradient(#666 0 1px, transparent 1px 3px) center / 7px 10px no-repeat, linear-gradient(90deg, #f5f5f5, #e2e2e2 50%, #c6c8cb 52%, #dadada); }
.t1 { height: 83px; }
.t2 { height: 130px; }
.t3 { height: 47px; margin: auto 0 8px; }
.second { margin-top: 5px; }
.propbox { display: flex; flex-direction: column; flex: 1; min-height: 0; margin-top: 2px; padding: 1px 1px 0; border: 1px solid #8b8f98; border-bottom: 0; background: #fff; }
.hsb { flex: none; height: 5px; background: #f0f0f0; }
.hthumb { display: block; width: 42px; height: 5px; margin-left: 19px; border: 1px solid #979797; border-bottom: 0; background: #e2e2e2; }

/* data tables */
.grid { width: 100%; border-spacing: 0; table-layout: fixed; }
.grid th, .grid td { height: 19px; padding: 0 2px; overflow: hidden; border-right: 1px solid #c0c0c0; border-bottom: 1px solid #c0c0c0; font-weight: normal; line-height: 16px; white-space: nowrap; text-align: left; }
.grid thead th { height: 21px; background: linear-gradient(#fff, #f0f0f0); text-align: center; }
.grid thead .hot { background: linear-gradient(#fadca4, #f0c060); color: #600060; }
.grid tbody th { background: linear-gradient(90deg, #fff, #ececec); text-align: center; }
.grid .cur th { background: #ffd28a; color: #600040; }
.grid .pick { background: #e0f0ff; }
.list .grid td { padding-left: 20px; }
.grid.props thead th { height: 22px; text-align: left; }
.grid.props tbody td, .grid.props tbody th { height: 21px; }
.grid.props tbody th { padding-left: 20px; background: #fff; text-align: left; }
.props .b th { color: #00f; }
.props .g { color: #808080; }
.bill .item td { background: #ccffff; }
.grid.bill .item .focus { background: #b4f0ff; }
.grid.bill tbody th { text-align: left; }
.grid.bill .code { padding-left: 0; }
.code span { display: flex; height: 18px; line-height: 18px; }
.code svg { height: 18px; }
.nd { width: 19px; }
.br { width: 30px; }
.bill td:nth-child(3), .bill td:nth-child(6) { text-align: center; }
.bill td:last-child, .price td { text-align: right; }
.grid.cyan td { background: #0ff; }
.grid.cyan .lit { background: #00f0ff; }
.grid.cyan td:nth-child(2) { padding-left: 20px; }
.grid.cyan, .grid.price { width: auto; }
.w21 { width: 21px; } .w22 { width: 22px; } .w26 { width: 26px; } .w39 { width: 39px; } .w46 { width: 46px; }
.w64 { width: 64px; } .w69 { width: 69px; } .w80 { width: 80px; } .w84 { width: 84px; } .w101 { width: 101px; }
.w136 { width: 136px; } .w151 { width: 151px; } .w201 { width: 201px; } .w236 { width: 236px; } .w600 { width: 600px; }
input[type="checkbox"], input[type="radio"] { display: block; flex: none; width: 13px; height: 13px; appearance: none; border: 1px solid #8e8f8f; background: linear-gradient(135deg, #cdd2da, #fff) center / 9px 9px no-repeat #f4f4f4; }
input[type="radio"] { border-radius: 50%; }
input[type="radio"]:checked { background: radial-gradient(circle, #7fd0f5 0 1px, #14689c 3px, #0c3e64 4px, #eee 5px); }

/* right side */
.right { display: flex; flex-direction: column; flex: 1; min-width: 0; margin-right: 1px; }
.acts { flex: none; height: 27px; padding-left: 5px; }
.acts .sep { margin: 0 -1px; }
.acts .drops { margin-right: -2px; }
.acts .more { margin: 0 4px 8px auto; }
.chev { width: 9px; height: 7px; }
.sheet { display: flex; flex-direction: column; justify-content: space-between; flex: none; height: 396px; padding: 1px; border: 1px solid #a0a0a4; border-bottom-width: 2px; background: #fff; }
.hscroll { display: flex; align-items: center; justify-content: flex-end; height: 16px; padding-right: 7px; background: #ececec; }
.tabs { display: flex; flex: none; align-items: center; height: 20px; margin-top: 4px; padding-left: 3px; border-top: 1px solid #ddd; }
.tabset { display: flex; flex: 1; justify-content: flex-end; gap: 7px; min-width: 0; margin-right: 2px; overflow: hidden; }
.tabset button:last-child { margin-right: -4px; }
.spin { display: flex; gap: 1px; padding-right: 2px; color: #36c; }
.spin button { display: flex; align-items: center; justify-content: center; width: 15px; height: 15px; border: 1px solid #aaa; }
.lower { display: flex; flex-direction: column; flex: 1; min-height: 0; padding: 1px; border: 1px solid #777; border-width: 2px 2px 3px 1px; }
.lower .scroller { border-bottom: 1px solid #aaa; }
.filter { flex: none; gap: 3px; height: 28px; padding-left: 97px; border: 0; }
.filter .quota { width: 374px; }
.chapter { width: 179px; }
.chapter select { padding-left: 101px; }
.kind { width: 78px; }
.end { width: 1px; height: 28px; background: #bbb; }
.foot { display: flex; flex: none; gap: 8px; height: 7px; padding-left: 8px; overflow: hidden; }
.foot button { height: 16px; padding: 0 5px; border: 1px solid #888; border-top: 0; }
.foot .on { background: #fff; }

/* code picker window */
.dialog {
  position: absolute;
  left: 380px;
  top: 235px;
  width: 578px;
  padding: 0 6px 6px;
  border: 1px solid #20252e;
  border-radius: 7px 7px 4px 4px;
  background: linear-gradient(100deg, #d9eafb 0, #c3dffa 25%, #abd0f6 38%, #b9dafa 60%, #d2e7fc 85%, #c3dffb);
  box-shadow: inset 0 0 0 1px #eef7ff, 0 1px 10px 3px rgba(0, 0, 0, .75);
}
.dtitle { display: flex; align-items: center; gap: 5px; height: 28px; padding-left: 1px; }
.dtitle .winbtns { margin-right: 0; }
.dbody { border: 1px solid #59636f; background: #f0f0f0; box-shadow: inset 1px 1px #fff, inset -2px -2px #a0a0a0; }
.line { display: flex; align-items: center; justify-content: space-between; }
.line label { display: flex; align-items: center; gap: 3px; }
.first { height: 43px; padding: 6px 16px 0 11px; }
.codes { height: 168px; margin: 0 9px; padding: 1px; border: 1px solid #a3a6ad; background: #fff; }
.expr { height: 55px; padding: 6px 18px 0 15px; }
.btn { display: flex; align-items: center; justify-content: center; gap: 8px; width: 62px; height: 24px; border: 1px solid #707070; border-radius: 3px; background: linear-gradient(#f3f3f3, #ebebeb 50%, #dcdcdc 52%, #cfcfcf); box-shadow: inset 0 0 0 1px #fafafa; }
.pickbtn { width: 73px; }
.exprbox { display: flex; height: 45px; margin: 0 17px 0 15px; padding: 1px; border: 1px solid #e2e6ee; border-top-color: #a3a6ad; background: #fff; }
.exprbox textarea { flex: 1; padding: 0 1px; border: 0; resize: none; outline: 0; background: #fff; overflow: hidden; }
.faint { color: #999; }
.hint { margin: 6px 15px 0; line-height: 12px; }
.dfoot { display: flex; align-items: center; gap: 9px; height: 43px; margin: 16px 2px 0 1px; padding: 2px 7px 0 14px; border-top: 1px solid #a0a0a0; box-shadow: inset 0 1px #fff; }
.rules { width: 110px; margin-right: 5px; }
.modes { display: flex; align-items: center; gap: 20px; width: 127px; height: 32px; margin-right: auto; padding: 4px 7px 0; border: 1px solid #d5dfe5; border-radius: 3px; }
.modes label { display: flex; align-items: center; gap: 3px; }
```
